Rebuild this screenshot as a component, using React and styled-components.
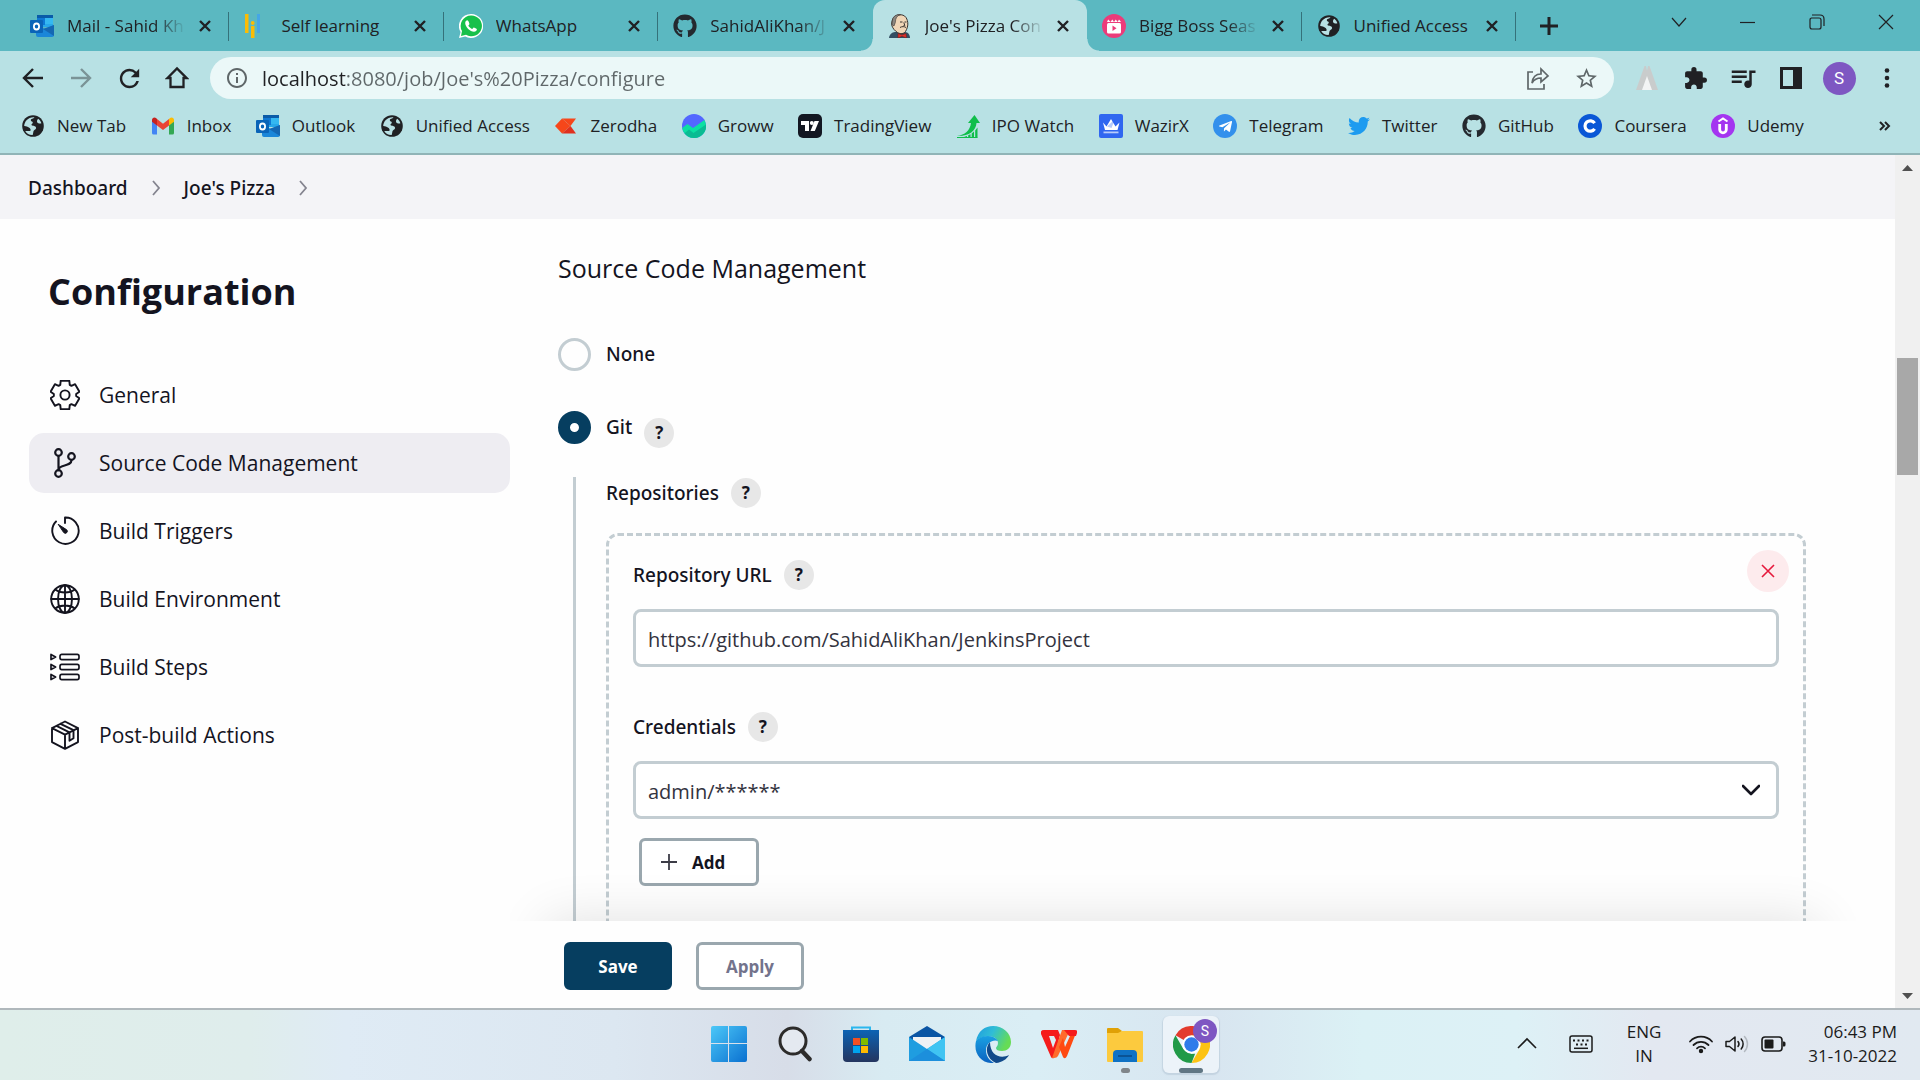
import React, { useState } from "react";
import styled, { createGlobalStyle, css } from "styled-components";
import { FaGithub, FaTwitter, FaTelegramPlane } from "react-icons/fa";
import { MdExtension, MdStarBorder, MdQueueMusic, MdInfoOutline, MdRefresh } from "react-icons/md";

const GlobalStyle = createGlobalStyle`
  *, *::before, *::after { box-sizing: border-box; }
  body { margin: 0; font-family: "Open Sans", "Noto Sans", sans-serif; color: #14141f; background: #fff; }
  button, input, select { font-family: inherit; }
  svg { display: block; flex: none; }
  a { color: inherit; text-decoration: none; }
`;

const Screen = styled.div`
  height: 100vh;
  display: flex;
  flex-direction: column;
  overflow: hidden;
`;

const PlainButton = styled.button`
  border: 0;
  padding: 0;
  background: transparent;
  color: inherit;
  display: flex;
  align-items: center;
  justify-content: center;
  flex: none;
`;

const mediumText = css`
  font-family: "Noto Sans", "Open Sans", sans-serif;
  font-weight: 500;
`;

/* ---------- browser chrome ---------- */

const TabStrip = styled.div`
  display: flex;
  height: 51px;
  flex: none;
  background: #5bb8c1;
  color: #202124;
`;

const TabList = styled.div`
  flex: 1;
  min-width: 0;
  display: flex;
  padding-left: 15px;
`;

const Tab = styled.div`
  position: relative;
  flex: 1 1 0;
  min-width: 0;
  display: flex;
  align-items: center;
  padding: 0 14px 0 15px;
  ${(p) =>
    p.$active &&
    css`
      background: #b8e1e4;
      border-radius: 12px 12px 0 0;
      &::before,
      &::after {
        content: "";
        position: absolute;
        bottom: 0;
        width: 12px;
        height: 12px;
      }
      &::before {
        right: 100%;
        background: radial-gradient(circle at 0 0, transparent 11px, #b8e1e4 12px);
      }
      &::after {
        left: 100%;
        background: radial-gradient(circle at 100% 0, transparent 11px, #b8e1e4 12px);
      }
    `}
  ${(p) =>
    p.$divider &&
    css`
      &::after {
        content: "";
        position: absolute;
        right: 0;
        top: 12px;
        width: 1px;
        height: 29px;
        background: #35717a;
      }
    `}
`;

const TabTitle = styled.span`
  flex: 1;
  min-width: 0;
  margin: 0 9px 0 13px;
  overflow: hidden;
  white-space: nowrap;
  font-size: 17px;
  line-height: 24px;
  mask-image: ${(p) => (p.$fade ? "linear-gradient(90deg, #000 calc(100% - 32px), transparent)" : "none")};
`;

const TabClose = styled(PlainButton)`
  width: 20px;
  height: 24px;
`;

const StripEnd = styled.div`
  flex: 0 0 404px;
  display: flex;
  justify-content: space-between;
  padding-left: 20px;
`;

const NewTab = styled(PlainButton)`
  width: 26px;
`;

const WindowControls = styled.div`
  display: flex;
`;

const WindowButton = styled(PlainButton)`
  width: 69px;
  height: 44px;
`;

const Toolbar = styled.div`
  flex: none;
  display: flex;
  padding: 6px 9px 0;
  background: #b8e1e4;
  color: #202124;
`;

const ToolButton = styled(PlainButton)`
  width: 48px;
  height: 42px;
  opacity: ${(p) => (p.$faded ? 0.4 : 1)};
`;

const Omnibox = styled.div`
  flex: 1;
  min-width: 0;
  height: 42px;
  margin: 0 9px;
  padding: 0 15px;
  display: flex;
  align-items: center;
  border-radius: 21px;
  background: #ebf8f8;
  color: #5f6769;
`;

const Address = styled.input`
  flex: 1;
  min-width: 0;
  height: 32px;
  margin-left: 13px;
  padding: 0;
  border: 0;
  outline: 0;
  font-size: 20px;
  color: #5f6769;
  background: linear-gradient(90deg, #202124 84px, #5f6769 84px);
  background-clip: text;
  -webkit-background-clip: text;
  -webkit-text-fill-color: transparent;
`;

const OmniActions = styled.div`
  display: flex;
  gap: 24px;
`;

const Avatar = styled.span`
  width: ${(p) => p.$size}px;
  height: ${(p) => p.$size}px;
  border-radius: 50%;
  display: flex;
  align-items: center;
  justify-content: center;
  background: #7e57c2;
  color: #fff;
  font-family: Roboto, sans-serif;
  font-size: ${(p) => p.$font}px;
`;

const BookmarkBar = styled.div`
  flex: none;
  display: flex;
  align-items: center;
  height: 56px;
  padding: 0 25px 0 21px;
  background: #b8e1e4;
  border-bottom: 2px solid #90b4b7;
  color: #202124;
`;

const BookmarkList = styled.nav`
  flex: 1;
  display: flex;
  justify-content: space-between;
`;

const Bookmark = styled.a`
  display: flex;
  align-items: center;
  gap: 12px;
  font-size: 17px;
  line-height: 24px;
  white-space: nowrap;
`;

const MoreBookmarks = styled(PlainButton)`
  width: 20px;
  margin-left: 71px;
`;

/* ---------- page ---------- */

const Viewport = styled.div`
  flex: 1;
  min-height: 0;
  display: flex;
  border-bottom: 2px solid #b0b8bc;
`;

const Page = styled.div`
  flex: 1;
  min-width: 0;
  display: flex;
  flex-direction: column;
`;

const Breadcrumbs = styled.nav`
  flex: none;
  height: 64px;
  padding: 2px 28px 0;
  display: flex;
  align-items: center;
  gap: 20px;
  background: #f4f4f7;
  font-size: 19px;
  line-height: 28px;
  ${mediumText}
`;

const Columns = styled.div`
  flex: 1;
  min-height: 0;
  display: grid;
  grid-template-columns: 510px minmax(0, 1fr);
  background: #fefefe;
`;

const Side = styled.aside`
  padding: 49px 0 0 29px;
`;

const Title = styled.h1`
  margin: 0 0 49px;
  padding-left: 19px;
  font-size: 36px;
  line-height: 48px;
  font-weight: 700;
`;

const SideNav = styled.nav`
  display: flex;
  flex-direction: column;
  gap: 8px;
`;

const SideLink = styled.a`
  display: flex;
  align-items: center;
  gap: 19px;
  height: 60px;
  padding-left: 21px;
  border-radius: 15px;
  background: ${(p) => (p.$active ? "#eeedf2" : "transparent")};
  font-size: 21px;
  line-height: 28px;
`;

const FormColumn = styled.main`
  display: flex;
  flex-direction: column;
  min-height: 0;
`;

const FormScroll = styled.div`
  position: relative;
  flex: 1;
  min-height: 0;
  overflow: hidden;
  padding: 32px 89px 0 48px;
  &::after {
    content: "";
    position: absolute;
    top: 100%;
    left: 36px;
    right: 77px;
    height: 87px;
    box-shadow: 0 0 52px rgba(0, 0, 0, 0.12);
  }
`;

const SectionTitle = styled.h2`
  margin: 0 0 53px;
  font-size: 25px;
  line-height: 34px;
  font-weight: 400;
`;

const RadioRow = styled.div`
  display: flex;
  align-items: flex-start;
  gap: 12px;
`;

const RadioLabel = styled.label`
  display: flex;
  align-items: center;
  gap: 15px;
  font-size: 19px;
  line-height: 33px;
  ${mediumText}
`;

const Radio = styled.input`
  appearance: none;
  width: 33px;
  height: 33px;
  margin: 0;
  border: 3px solid #c3cdd2;
  border-radius: 50%;
  background: #fefefe;
  &:checked {
    border: 12px solid #063e60;
  }
`;

const RadioGroup = styled.div`
  display: flex;
  flex-direction: column;
  gap: 40px;
`;

const Help = styled(PlainButton)`
  width: 30px;
  height: 30px;
  margin-top: ${(p) => (p.$lowered ? 7 : 0)}px;
  border-radius: 50%;
  background: #e7e7e7;
  color: #14141f;
  font-size: 17px;
  font-weight: 700;
  line-height: 30px;
`;

const Nested = styled.div`
  margin: 29px 0 0 15px;
  padding: 1px 0 0 30px;
  border-left: 3px solid #c3cdd2;
`;

const FieldHead = styled.div`
  display: flex;
  align-items: center;
  gap: 12px;
  height: 30px;
  font-size: 19px;
  line-height: 30px;
  ${mediumText}
`;

const RepoBox = styled.div`
  position: relative;
  margin-top: 25px;
  padding: 24px 24px 200px;
  border: 3px dashed #c3cdd2;
  border-radius: 12px;
`;

const RemoveButton = styled(PlainButton)`
  position: absolute;
  top: 14px;
  right: 14px;
  width: 42px;
  height: 42px;
  border-radius: 50%;
  background: #fdebed;
`;

const Field = styled.div`
  margin-bottom: 45px;
`;

const controlStyle = css`
  display: block;
  width: 100%;
  height: 58px;
  margin-top: 19px;
  padding: 2px 12px 0;
  border: 3px solid #c3cdd2;
  border-radius: 8px;
  outline: 0;
  background: #fff;
  color: #33333e;
  font-size: 20px;
`;

const TextInput = styled.input`
  ${controlStyle}
`;

const SelectWrap = styled.div`
  display: grid;
  align-items: center;
  margin-bottom: 19px;
  & > * {
    grid-area: 1 / 1;
  }
  & > svg {
    justify-self: end;
    margin: 19px 19px 0 0;
    pointer-events: none;
  }
`;

const Select = styled.select`
  ${controlStyle}
  appearance: none;
`;

const Button = styled.button`
  display: flex;
  align-items: center;
  justify-content: center;
  gap: 15px;
  width: ${(p) => p.$width || 108}px;
  height: 48px;
  padding: 0;
  border: 3px solid ${(p) => (p.$primary ? "#063e60" : "#9aa7ae")};
  border-radius: 6px;
  background: ${(p) => (p.$primary ? "#063e60" : "#fff")};
  color: ${(p) => (p.$primary ? "#fff" : p.$muted ? "#73738c" : "#14141f")};
  font-size: 17px;
  font-weight: 700;
`;

const AddRow = styled.div`
  padding-left: 6px;
`;

const AddButton = styled(Button)`
  justify-content: flex-start;
  padding-left: 19px;
`;

const FormActions = styled.div`
  flex: none;
  display: flex;
  gap: 24px;
  padding: 21px 54px 18px;
`;

const ScrollTrack = styled.div`
  flex: none;
  width: 25px;
  display: flex;
  flex-direction: column;
  align-items: center;
  justify-content: space-between;
  padding: 9px 0 8px;
  background: #f0f0f0;
`;

const ScrollThumb = styled.div`
  width: 21px;
  height: 117px;
  margin: 187px 0 auto;
  background: #a8a8a8;
`;

/* ---------- taskbar ---------- */

const Taskbar = styled.div`
  flex: none;
  height: 70px;
  padding-bottom: 2px;
  display: grid;
  grid-template-columns: 1fr auto 1fr;
  align-items: center;
  background: linear-gradient(
    90deg,
    #dfeeea 0%,
    #dfedec 13%,
    #dfebf5 18%,
    #dce7f1 32%,
    #d7dde8 41%,
    #d8ebf2 46%,
    #daeef5 54%,
    #d8e5f0 63%,
    #dbf1f5 71%,
    #ddf1f6 79%,
    #e3e8f1 86%,
    #e1e9f1 100%
  );
`;

const Apps = styled.div`
  grid-column: 2;
  display: flex;
  gap: 10px;
`;

const AppButton = styled(PlainButton)`
  position: relative;
  width: 56px;
  height: 57px;
  border-radius: 6px;
  ${(p) =>
    p.$active &&
    css`
      background: #ecf3f9;
      box-shadow: 0 1px 1px 1px rgba(150, 170, 190, 0.3);
    `}
  ${(p) =>
    p.$mark &&
    css`
      &::after {
        content: "";
        position: absolute;
        bottom: 0;
        left: calc(50% - ${p.$mark / 2}px);
        width: ${p.$mark}px;
        height: 5px;
        border-radius: 3px;
        background: ${p.$active ? "#607684" : "#80868a"};
      }
    `}
`;

const AppBadge = styled.span`
  position: absolute;
  top: 3px;
  right: 2px;
`;

const Tray = styled.div`
  justify-self: end;
  display: flex;
  align-items: center;
  padding-right: 23px;
  color: #1b1b1b;
  font-size: 17px;
  line-height: 24px;
`;

const TrayIcons = styled.div`
  display: flex;
  align-items: center;
  gap: ${(p) => p.$gap}px;
`;

const Language = styled.div`
  margin: 0 27px 0 34px;
  text-align: center;
`;

const Clock = styled.div`
  margin-left: 22px;
  text-align: right;
`;

/* ---------- drawings ---------- */

const Outlook = () => (
  <svg width="24" height="24" viewBox="0 0 24 24">
    <rect x="7" y="1" width="16" height="12" fill="#28a8ea" />
    <rect x="7" y="1" width="16" height="3" fill="#0a5ba8" />
    <rect x="7" y="4" width="8" height="7" fill="#0f78d4" />
    <rect x="15" y="4" width="8" height="6" fill="#35b8f1" />
    <path d="M6 11l9 4 9-4v10a2 2 0 0 1-2 2H8a2 2 0 0 1-2-2z" fill="#1a86d9" />
    <path d="M24 11v11l-11-7z" fill="#1467b3" />
    <rect x="0" y="6" width="13" height="13" rx="1" fill="#0a64b8" />
    <ellipse cx="6.500" cy="12.500" rx="2.600" ry="3" fill="none" stroke="#fff" strokeWidth="1.800" />
  </svg>
);

const SelfLearning = () => (
  <svg width="24" height="24" viewBox="0 0 24 24">
    <rect x="1" y="0" width="3.500" height="19" fill="#fbbc05" />
    <rect x="13" y="0" width="3" height="19" fill="#45a6e6" />
    <rect x="7" y="12" width="3.500" height="12" fill="#fbbc05" />
    <circle cx="8.700" cy="9" r="1.900" fill="#fbbc05" />
  </svg>
);

const WhatsAppMark = () => (
  <svg width="24" height="24" viewBox="0 0 24 24">
    <path d="M12 0a12 12 0 0 0-10.400 18L0 24l6.200-1.600A12 12 0 1 0 12 0z" fill="#fff" />
    <path d="M12 1.500a10.400 10.400 0 0 0-9 15.600L2 22l5-1.300A10.400 10.400 0 1 0 12 1.500z" fill="#17c04b" />
    <path
      d="M8.200 6.200c-.7 0-2 1-2 2.700 0 4 5 8.800 8.800 8.800 1.600 0 2.900-1 2.900-2.200 0-.8-2.600-2-3.100-2-.6 0-1.100 1.500-1.700 1.500-.8 0-3.700-2.500-3.700-3.400 0-.5 1-1 1-1.700 0-.6-1-3.700-2.200-3.700z"
      fill="#fff"
    />
  </svg>
);

const Globe = () => (
  <svg width="24" height="24" viewBox="0 0 24 24">
    <circle cx="12" cy="12" r="10.800" fill="#202124" />
    <path
      d="M13.500 3.200c-1 1.800-3.700 1.300-3.700 3.100 0 1.500 2 .9 2 2.300 0 1.300-1.300 1-1.300 2.100 0 1.500 4.600.4 4.600 3.300 0 1.700-2.600 1.800-2.800 4.200l-.6 2.900c-3.300.2-6-1.400-7.500-4.100l4.400.1c1.900 0 .8-2.800-.4-3.300-1.700-.8-3.100-1.800-5-1.700C3.200 7.200 7.700 2.500 13.500 3.200z"
      fill="#b8e1e4"
    />
    <path d="M17.200 4.800c1.600 1.200 2.700 2.700 3.200 4.500-1.700.7-3.900.2-4.300-1.200-.3-1.200.1-2.400 1.100-3.300z" fill="#b8e1e4" />
  </svg>
);

const Butler = () => (
  <svg width="24" height="24" viewBox="0 0 24 24">
    <path d="M1 24c.5-4 3-5.500 6-6l10 0c3 .3 5 2.500 5 6z" fill="#334e62" />
    <path d="M5 4.500C7 .5 15-1 18 3.500c2.500 4 2.500 9-.5 14-1.500 2.600-5.500 2.600-8 1-3-2-4.500-4-5.500-6.500-.8-2.500 0-5.500 1-7.500z" fill="#f0d6b7" stroke="#3a3430" strokeWidth="1" />
    <path d="M4.500 6C5 1.500 10 0 12.500.7 9 1.500 7.500 4 7.300 8.500L6 12l-2-1.500z" fill="#8b8780" stroke="#3a3430" strokeWidth=".6" />
    <path d="M12 8h2.500M16.500 8h2M12 13.500c2-1.300 4.500-1 6 0M15.800 8.500l1 3-1.500.4" fill="none" stroke="#3a3430" strokeWidth="1" />
    <path d="M10 19.500l4 1.500 4-1.500.5 4.500-4.500-1.700L10 24z" fill="#e0312b" stroke="#7c1c18" strokeWidth=".6" />
  </svg>
);

const BigBoss = () => (
  <svg width="24" height="24" viewBox="0 0 24 24">
    <circle cx="12" cy="12" r="12" fill="#ec3b7a" />
    <rect x="5" y="9" width="14" height="10.500" rx="1.500" fill="#fff" />
    <path d="M5 8l1.200-2.500L8.500 8l1.800-2.500L12 8l1.800-2.500L15.600 8 17 5.500 19 8z" fill="#fff" />
    <path d="M10.500 11.500l4 2.700-4 2.700z" fill="#ec3b7a" />
  </svg>
);

const Gmail = () => (
  <svg width="24" height="24" viewBox="0 0 24 24">
    <path d="M1 6v13a1.500 1.500 0 0 0 1.500 1.500H6V10z" fill="#4285f4" />
    <path d="M23 6v13a1.500 1.500 0 0 1-1.500 1.500H18V10z" fill="#34a853" />
    <path d="M18 5v6.500l5-3.800V6c0-2.500-2.500-3.200-4-2z" fill="#fbbc04" />
    <path d="M1 6v1.700l5 3.800V5L5 4C3.500 2.800 1 3.500 1 6z" fill="#c5221f" />
    <path d="M6 5l6 4.700L18 5v6.500l-6 4.600-6-4.600z" fill="#ea4335" />
  </svg>
);

const Zerodha = () => (
  <svg width="24" height="24" viewBox="0 0 24 24">
    <path d="M8 4.500h14L16.500 12z" fill="#f6461a" />
    <path d="M8 4.500L1 12l7 7.500L16.500 12z" fill="#f6461a" />
    <path d="M8 19.500h14L16.500 12z" fill="#e0301e" />
  </svg>
);

const Groww = () => (
  <svg width="24" height="24" viewBox="0 0 24 24">
    <circle cx="12" cy="12" r="12" fill="#5367ff" />
    <path d="M.2 14l5.300-4 5.500 4L22.400 6A12 12 0 1 1 .2 14z" fill="#0be0a2" />
    <path d="M2.500 19.200L7 15.500l4.500 3.500L24 10.500A12 12 0 0 1 2.500 19.200z" fill="#0abb92" />
  </svg>
);

const TradingView = () => (
  <svg width="24" height="24" viewBox="0 0 24 24">
    <rect width="24" height="24" rx="5" fill="#131722" />
    <path d="M3 7h8v10H7v-6H3zM16.500 7H21l-4.200 10h-4.300z" fill="#fff" />
    <circle cx="13.800" cy="9" r="2" fill="#fff" />
  </svg>
);

const IpoWatch = () => (
  <svg width="24" height="24" viewBox="0 0 24 24">
    <path d="M1 22c8-1 13-5.500 14-13h-3L18.500 1l5.500 8h-3.500c-.5 8-8 13.500-19.500 13z" fill="#0fbe4a" />
    <path d="M8.500 23.500v-.8l2.500-.6v1.400zm3.700 0v-2.200l2.300-1v3.200zm3.500 0v-4l2.300-2v6zm3.500-7l2.300-3v10h-2.300z" fill="#0fbe4a" />
    <path d="M1 23.500h20.500" stroke="#0fbe4a" />
  </svg>
);

const WazirX = () => (
  <svg width="24" height="24" viewBox="0 0 24 24">
    <rect width="24" height="24" rx="2" fill="#3067f0" />
    <path d="M4 8.500l3.500 4L12 5l4.500 7.500 4-4-2 7.500H6z" fill="#fff" />
    <path d="M8 12.500L16 5l-3.500 9z" fill="#3067f0" opacity=".35" />
    <path d="M4.500 17.500h15v1.800h-15z" fill="#b9ccfb" />
  </svg>
);

const Disc = styled.span`
  width: 24px;
  height: 24px;
  display: flex;
  align-items: center;
  justify-content: center;
  border-radius: 50%;
  background: ${(p) => p.$fill};
  color: #fff;
`;

const Coursera = () => (
  <svg width="24" height="24" viewBox="0 0 24 24">
    <circle cx="12" cy="12" r="12" fill="#0a57d6" />
    <path d="M16.600 9.200a5.200 5.200 0 1 0 0 5.600" fill="none" stroke="#fff" strokeWidth="3.200" />
  </svg>
);

const Udemy = () => (
  <svg width="24" height="24" viewBox="0 0 24 24">
    <circle cx="12" cy="12" r="12" fill="#a435f0" />
    <path d="M7.500 7.500L12 4.500l4.500 3" fill="none" stroke="#fff" strokeWidth="2" />
    <path d="M8.700 10v5.500a3.300 3.300 0 0 0 6.600 0V10" fill="none" stroke="#fff" strokeWidth="2.800" />
  </svg>
);

const Line = ({ size = 24, d, weight = 2, color = "currentColor", cap = "butt" }) => (
  <svg width={size} height={size} viewBox={`0 0 ${size} ${size}`} fill="none" stroke={color} strokeWidth={weight} strokeLinecap={cap} strokeLinejoin={cap === "round" ? "round" : "miter"}>
    <path d={d} />
  </svg>
);

const gearPath = [0, 1, 2, 3, 4, 5]
  .map((k) =>
    [
      [-25, 11.2],
      [-17, 14.8],
      [17, 14.8],
      [25, 11.2],
    ]
      .map(([offset, r]) => {
        const a = ((k * 60 + offset - 90) * Math.PI) / 180;
        return `${15 + r * Math.cos(a)} ${15 + r * Math.sin(a)}`;
      })
      .join("L")
  )
  .join("L");

const SideIcon = ({ children }) => (
  <svg width="30" height="30" viewBox="0 0 30 30" fill="none" stroke="#14141f" strokeWidth="1.900" strokeLinecap="round" strokeLinejoin="round">
    {children}
  </svg>
);

const GearIcon = () => (
  <SideIcon>
    <path d={`M${gearPath}Z`} />
    <circle cx="15" cy="15" r="4.600" />
  </SideIcon>
);

const BranchIcon = () => (
  <SideIcon>
    <g strokeWidth="2.200">
      <circle cx="8.500" cy="4.500" r="3.300" />
      <circle cx="8.500" cy="25.500" r="3.300" />
      <circle cx="21.500" cy="8.500" r="3.300" />
      <path d="M8.500 8v14.200M21.500 12c0 7.500-13 3.500-13 10" />
    </g>
  </SideIcon>
);

const TimerIcon = () => (
  <SideIcon>
    <path d="M15 7V1.500A13.200 13.200 0 1 1 6 5.500" />
    <path d="M8.500 8.500l8.200 5.300a2 2 0 0 1-2.800 2.900z" fill="#14141f" strokeWidth="1" />
  </SideIcon>
);

const WebIcon = () => (
  <SideIcon>
    <circle cx="15" cy="15" r="13.800" />
    <ellipse cx="15" cy="15" rx="7" ry="13.800" />
    <path d="M15 1.200v27.600M1.200 15h27.600M5.500 5.800c5 3.600 14 3.600 19 0M5.500 24.200c5-3.600 14-3.600 19 0" />
  </SideIcon>
);

const StepsIcon = () => (
  <SideIcon>
    {[5, 15, 25].map((y) => (
      <g key={y} strokeWidth="1.700">
        <path d={`M1 ${y - 2.6}l4.600 2.600L1 ${y + 2.6}z`} />
        <rect x="10" y={y - 2.6} width="19" height="5.200" rx="1.800" />
      </g>
    ))}
  </SideIcon>
);

const PackageIcon = () => (
  <SideIcon>
    <path d="M15 1.500l13 6.600v14L15 28.800 2 22.100v-14zM2 8.100l13 6.500 13-6.500M15 14.600v14.200M6.500 5.900l13 6.500v8.300l4-2.500v-8L10.500 3.800" />
  </SideIcon>
);

/* ---------- data ---------- */

const tabs = [
  { title: "Mail - Sahid Kh", icon: <Outlook />, divider: true, fade: true },
  { title: "Self learning", icon: <SelfLearning />, divider: true },
  { title: "WhatsApp", icon: <WhatsAppMark />, divider: true },
  { title: "SahidAliKhan/J", icon: <FaGithub size={24} color="#24292f" />, fade: true },
  { title: "Joe's Pizza Con", icon: <Butler />, active: true, fade: true },
  { title: "Bigg Boss Seas", icon: <BigBoss />, divider: true, fade: true },
  { title: "Unified Access", icon: <Globe />, divider: true },
];

const bookmarks = [
  ["New Tab", <Globe />],
  ["Inbox", <Gmail />],
  ["Outlook", <Outlook />],
  ["Unified Access", <Globe />],
  ["Zerodha", <Zerodha />],
  ["Groww", <Groww />],
  ["TradingView", <TradingView />],
  ["IPO Watch", <IpoWatch />],
  ["WazirX", <WazirX />],
  ["Telegram", <Disc $fill="#3390ec"><FaTelegramPlane size={15} /></Disc>],
  ["Twitter", <FaTwitter size={22} color="#1d9bf0" />],
  ["GitHub", <FaGithub size={24} color="#24292f" />],
  ["Coursera", <Coursera />],
  ["Udemy", <Udemy />],
];

const sections = [
  ["General", <GearIcon />],
  ["Source Code Management", <BranchIcon />],
  ["Build Triggers", <TimerIcon />],
  ["Build Environment", <WebIcon />],
  ["Build Steps", <StepsIcon />],
  ["Post-build Actions", <PackageIcon />],
];

/* ---------- taskbar drawings ---------- */

const WindowsLogo = () => (
  <svg width="36" height="36" viewBox="0 0 36 36">
    <defs>
      <linearGradient id="win" x1="0" y1="0" x2="1" y2="1">
        <stop offset="0" stopColor="#4cc8f8" />
        <stop offset="1" stopColor="#0a70d0" />
      </linearGradient>
    </defs>
    <path d="M2 0h15v17H0V2a2 2 0 0 1 2-2zM18 0h16a2 2 0 0 1 2 2v15H18zM0 18h17v18H2a2 2 0 0 1-2-2zM18 18h18v16a2 2 0 0 1-2 2H18z" fill="url(#win)" />
  </svg>
);

const SearchLogo = () => (
  <svg width="36" height="36" viewBox="0 0 36 36" fill="none" stroke="#2c2b2a">
    <circle cx="16" cy="15" r="13" strokeWidth="3" fill="#e4e9f0" />
    <path d="M25 25l7.500 8" strokeWidth="4.500" strokeLinecap="round" />
  </svg>
);

const StoreLogo = () => (
  <svg width="36" height="38" viewBox="0 0 36 38">
    <defs>
      <linearGradient id="store" x1="0" y1="0" x2="0" y2="1">
        <stop offset="0" stopColor="#0c63b4" />
        <stop offset="1" stopColor="#24355f" />
      </linearGradient>
    </defs>
    <path d="M9 8V2.500h18V8" fill="none" stroke="#2bb7ee" strokeWidth="2" />
    <path d="M0 5h36v28a4 4 0 0 1-4 4H4a4 4 0 0 1-4-4z" fill="url(#store)" />
    <path d="M10 13h7v7h-7z" fill="#f25022" />
    <path d="M18 13h7v7h-7z" fill="#7fba00" />
    <path d="M10 21h7v7h-7z" fill="#00a4ef" />
    <path d="M18 21h7v7h-7z" fill="#ffb900" />
  </svg>
);

const MailLogo = () => (
  <svg width="36" height="36" viewBox="0 0 36 36">
    <path d="M0 11L18 0l18 11v6H0z" fill="#0b55a4" />
    <path d="M4 11h28v5l-14 10L4 16z" fill="#f0f2f5" />
    <path d="M0 11l18 12 18-12v24H0z" fill="#1f9de0" />
    <path d="M36 11v24L18 23z" fill="#40c4f2" />
    <path d="M0 35h36L18 23z" fill="#1c8fdc" />
  </svg>
);

const EdgeLogo = () => (
  <svg width="36" height="37" viewBox="0 0 36 37">
    <defs>
      <linearGradient id="edgeTop" x1="0" y1="0" x2="1" y2=".4">
        <stop offset="0" stopColor="#1e9be0" />
        <stop offset=".5" stopColor="#30bdd6" />
        <stop offset="1" stopColor="#66dc55" />
      </linearGradient>
      <linearGradient id="edgeLow" x1="0" y1="0" x2="0" y2="1">
        <stop offset="0" stopColor="#1aa0e2" />
        <stop offset="1" stopColor="#0b62c0" />
      </linearGradient>
    </defs>
    <path d="M1 15C3 5 10 0 18 0c10 0 18 7 18 16 0 6-4 9-9 9-4 0-6-1-6-3 0-1 2-2 2-5C23 10 10 7 1 15z" fill="url(#edgeTop)" />
    <path d="M1 15c5-6 18-7 22 0-5-2-12 2-12 9 0 6 3 10 8 13C7 38-2 28 1 15z" fill="url(#edgeLow)" />
    <path d="M15 16c-6 6-3 17 6 21 6-.5 11-4 13-8-8 4-19 1-19-13z" fill="#114a8b" />
  </svg>
);

const WpsLogo = () => (
  <svg width="36" height="30" viewBox="0 0 36 30">
    <path d="M3 1h14l2 5-3 12-3 11q-2 1-3-1L0 5Q-1 1 3 1zM8 7l4 12 3-8-2-4z" fill="#f51b1b" fillRule="evenodd" />
    <path d="M21 1h8L17 27q-1 2-4 2h-2z" fill="#ff6b2c" />
    <path d="M29 7L35 4 26 27q-2 4-4 1l-4-10 4-9 2 9z" fill="#ff4a12" />
    <path d="M23 1h11q3 0 2 3l-1 3h-7z" fill="#f51b1b" />
  </svg>
);

const FolderLogo = () => (
  <svg width="36" height="35" viewBox="0 0 36 35">
    <path d="M0 2a1 1 0 0 1 1-1h10l4 3-3 4H0z" fill="#e0a106" />
    <path d="M0 6h11l4-2h20a1 1 0 0 1 1 1v29a1 1 0 0 1-1 1H1a1 1 0 0 1-1-1z" fill="#fcca3e" />
    <path d="M6 35V27a4 4 0 0 1 4-4h16a4 4 0 0 1 4 4v8z" fill="#0f72c4" />
    <path d="M11 29h14" stroke="#0a4a86" strokeWidth="1.500" />
  </svg>
);

const ChromeLogo = () => (
  <svg width="37" height="37" viewBox="0 0 36 36">
    <path d="M18 18L2.400 9A18 18 0 0 1 33.600 9z" fill="#e33b2e" />
    <path d="M18 9h15.600A18 18 0 0 1 18 36l7.800-13.500z" fill="#fcc314" />
    <path d="M2.400 9l7.800 13.500L18 27h3.500L18 36A18 18 0 0 1 2.400 9z" fill="#219a48" />
    <circle cx="18" cy="18" r="9" fill="#fff" />
    <circle cx="18" cy="18" r="7" fill="#2f7bea" />
  </svg>
);

const WifiIcon = () => (
  <svg width="26" height="20" viewBox="0 0 26 20" fill="none" stroke="#1b1b1b" strokeWidth="1.800" strokeLinecap="round">
    <path d="M2 7.500a15 15 0 0 1 22 0M5.500 11a10.500 10.500 0 0 1 15 0M9 14.300a5.800 5.800 0 0 1 8 0" />
    <circle cx="13" cy="17" r="1.300" fill="#1b1b1b" />
  </svg>
);

const SpeakerIcon = () => (
  <svg width="25" height="20" viewBox="0 0 25 20" fill="none" stroke="#1b1b1b" strokeWidth="1.500" strokeLinejoin="round" strokeLinecap="round">
    <path d="M1 7.500v5h3.500L10 17V3L4.500 7.500z" />
    <path d="M13 7.500a4 4 0 0 1 0 5M16.200 5a7.500 7.500 0 0 1 0 10" />
    <path d="M19.500 2.500a11 11 0 0 1 0 15" stroke="#b3b9c0" />
  </svg>
);

const BatteryIcon = () => (
  <svg width="25" height="18" viewBox="0 0 25 18">
    <rect x="1" y="2" width="20" height="14" rx="3" fill="none" stroke="#1b1b1b" strokeWidth="1.600" />
    <rect x="3.500" y="4.500" width="9" height="9" rx="1" fill="#1b1b1b" />
    <path d="M22 6.500h1a1.500 1.500 0 0 1 1.500 1.500v2a1.500 1.500 0 0 1-1.500 1.500h-1z" fill="#1b1b1b" />
  </svg>
);

const KeyboardIcon = () => (
  <svg width="24" height="18" viewBox="0 0 24 18" fill="none" stroke="#1b1b1b" strokeWidth="1.500">
    <rect x="1" y="1" width="22" height="16" rx="2" />
    <path d="M4 5.500h17M7 9.500h11" strokeDasharray="2 2.500" strokeWidth="1.800" />
    <path d="M5 13.300h14" />
  </svg>
);

const ExtensionA = () => (
  <svg width="24" height="24" viewBox="0 0 24 24">
    <path d="M1 24L9.500 0h5L23 24z" fill="#c9cccc" />
    <path d="M7 24l5-14 5 14z" fill="#f2f4f4" />
    <path d="M11 0h2l-1 5z" fill="#b8e1e4" />
  </svg>
);

/* ---------- sections ---------- */

function BrowserChrome() {
  const [address, setAddress] = useState("localhost:8080/job/Joe's%20Pizza/configure");
  return (
    <>
      <TabStrip>
        <TabList>
          {tabs.map((tab) => (
            <Tab key={tab.title} $active={tab.active} $divider={tab.divider}>
              {tab.icon}
              <TabTitle $fade={tab.fade}>{tab.title}</TabTitle>
              <TabClose aria-label="Close tab">
                <Line size={14} d="M2 2L12 12M12 2L2 12" weight={2.4} />
              </TabClose>
            </Tab>
          ))}
        </TabList>
        <StripEnd>
          <NewTab aria-label="New tab">
            <Line size={18} d="M9 0V18M0 9H18" weight={3} />
          </NewTab>
          <WindowControls>
            <WindowButton aria-label="Search tabs">
              <Line size={16} d="M1 4L8 12L15 4" weight={1.2} />
            </WindowButton>
            <WindowButton aria-label="Minimize">
              <Line size={16} d="M0 8.500H15" weight={1.2} />
            </WindowButton>
            <WindowButton aria-label="Restore">
              <Line size={18} d="M3 5H11Q13 5 13 7V14Q13 16 11 16H4Q2 16 2 14V7Q2 5 4 5M4 2H12Q16 2 16 6V13" weight={1.2} />
            </WindowButton>
            <WindowButton aria-label="Close">
              <Line size={16} d="M1 1L15 15M15 1L1 15" weight={1.2} />
            </WindowButton>
          </WindowControls>
        </StripEnd>
      </TabStrip>
      <Toolbar>
        <ToolButton aria-label="Back">
          <Line d="M22 12H3M12 3L3 12L12 21" weight={2.4} />
        </ToolButton>
        <ToolButton aria-label="Forward" $faded>
          <Line d="M2 12H21M12 3L21 12L12 21" weight={2.4} />
        </ToolButton>
        <ToolButton aria-label="Reload">
          <MdRefresh size={29} />
        </ToolButton>
        <ToolButton aria-label="Home">
          <Line d="M2.500 12L12 2.500L21.500 12H18.500V21H5.500V12Z" weight={2.3} />
        </ToolButton>
        <Omnibox>
          <MdInfoOutline size={24} />
          <Address aria-label="Address" value={address} onChange={(e) => setAddress(e.target.value)} />
          <OmniActions>
            <PlainButton aria-label="Share">
              <Line d="M7 6H2V23H18V18M6 17Q7 8 15 8V3L22 10L15 16V12Q9 12 6 17Z" weight={1.7} />
            </PlainButton>
            <PlainButton aria-label="Bookmark this tab">
              <MdStarBorder size={25} />
            </PlainButton>
          </OmniActions>
        </Omnibox>
        <ToolButton aria-label="Extension">
          <ExtensionA />
        </ToolButton>
        <ToolButton aria-label="Extensions">
          <MdExtension size={25} />
        </ToolButton>
        <ToolButton aria-label="Media controls">
          <MdQueueMusic size={30} />
        </ToolButton>
        <ToolButton aria-label="Side panel">
          <svg width="22" height="22" viewBox="0 0 22 22">
            <path d="M0 0h22v22H0zM3 3v16h10V3z" fill="#202124" fillRule="evenodd" />
          </svg>
        </ToolButton>
        <ToolButton aria-label="Profile">
          <Avatar $size={33} $font={17}>S</Avatar>
        </ToolButton>
        <ToolButton aria-label="Menu">
          <svg width="6" height="20" viewBox="0 0 6 20" fill="#202124">
            <circle cx="3" cy="2.500" r="2.300" />
            <circle cx="3" cy="10" r="2.300" />
            <circle cx="3" cy="17.500" r="2.300" />
          </svg>
        </ToolButton>
      </Toolbar>
      <BookmarkBar>
        <BookmarkList aria-label="Bookmarks">
          {bookmarks.map(([name, icon]) => (
            <Bookmark key={name} href="#">
              {icon}
              {name}
            </Bookmark>
          ))}
        </BookmarkList>
        <MoreBookmarks aria-label="More bookmarks">
          <Line size={12} d="M1 2L5 6L1 10M6 2L10 6L6 10" weight={2} />
        </MoreBookmarks>
      </BookmarkBar>
    </>
  );
}

const Crumb = () => <Line size={16} d="M5 1L11 8L5 15" weight={1.8} color="#84848f" />;

const HelpButton = ({ topic, lowered }) => (
  <Help $lowered={lowered} aria-label={`Help for ${topic}`}>?</Help>
);

function SourceCodeForm() {
  const [scm, setScm] = useState("git");
  const [url, setUrl] = useState("https://github.com/SahidAliKhan/JenkinsProject");
  return (
    <FormColumn>
      <FormScroll>
        <SectionTitle>Source Code Management</SectionTitle>
        <RadioGroup>
          <RadioRow>
            <RadioLabel>
              <Radio type="radio" name="scm" checked={scm === "none"} onChange={() => setScm("none")} />
              None
            </RadioLabel>
          </RadioRow>
          <RadioRow>
            <RadioLabel>
              <Radio type="radio" name="scm" checked={scm === "git"} onChange={() => setScm("git")} />
              Git
            </RadioLabel>
            <HelpButton topic="Git" lowered />
          </RadioRow>
        </RadioGroup>
        <Nested>
          <FieldHead>
            Repositories
            <HelpButton topic="Repositories" />
          </FieldHead>
          <RepoBox>
            <RemoveButton aria-label="Remove repository">
              <Line size={14} d="M1 1L13 13M13 1L1 13" weight={1.6} color="#e6193c" />
            </RemoveButton>
            <Field>
              <FieldHead>
                <label htmlFor="repo-url">Repository URL</label>
                <HelpButton topic="Repository URL" />
              </FieldHead>
              <TextInput id="repo-url" value={url} onChange={(e) => setUrl(e.target.value)} />
            </Field>
            <FieldHead>
              <label htmlFor="credentials">Credentials</label>
              <HelpButton topic="Credentials" />
            </FieldHead>
            <SelectWrap>
              <Select id="credentials" defaultValue="admin">
                <option value="admin">admin/******</option>
              </Select>
              <Line size={18} d="M1 5L9 13L17 5" weight={2.6} cap="round" />
            </SelectWrap>
            <AddRow>
              <AddButton $width={120}>
                <Line size={16} d="M8 0V16M0 8H16" weight={1.8} color="#3c3c47" />
                Add
              </AddButton>
            </AddRow>
          </RepoBox>
        </Nested>
      </FormScroll>
      <FormActions>
        <Button $primary>Save</Button>
        <Button $muted>Apply</Button>
      </FormActions>
    </FormColumn>
  );
}

function WindowsTaskbar() {
  return (
    <Taskbar>
      <Apps>
        <AppButton aria-label="Start"><WindowsLogo /></AppButton>
        <AppButton aria-label="Search"><SearchLogo /></AppButton>
        <AppButton aria-label="Microsoft Store"><StoreLogo /></AppButton>
        <AppButton aria-label="Mail"><MailLogo /></AppButton>
        <AppButton aria-label="Edge"><EdgeLogo /></AppButton>
        <AppButton aria-label="WPS Office"><WpsLogo /></AppButton>
        <AppButton aria-label="File Explorer" $mark={9}><FolderLogo /></AppButton>
        <AppButton aria-label="Chrome" $active $mark={24}>
          <ChromeLogo />
          <AppBadge>
            <Avatar $size={24} $font={14}>S</Avatar>
          </AppBadge>
        </AppButton>
      </Apps>
      <Tray>
        <TrayIcons $gap={32}>
          <Line size={20} d="M1 14L10 5L19 14" weight={1.6} />
          <KeyboardIcon />
        </TrayIcons>
        <Language>ENG<br />IN</Language>
        <TrayIcons $gap={11}>
          <WifiIcon />
          <SpeakerIcon />
          <BatteryIcon />
        </TrayIcons>
        <Clock>06:43 PM<br />31-10-2022</Clock>
      </Tray>
    </Taskbar>
  );
}

export default function App() {
  return (
    <Screen>
      <GlobalStyle />
      <BrowserChrome />
      <Viewport>
        <Page>
          <Breadcrumbs aria-label="Breadcrumb">
            <a href="#">Dashboard</a>
            <Crumb />
            <a href="#">Joe's Pizza</a>
            <Crumb />
          </Breadcrumbs>
          <Columns>
            <Side>
              <Title>Configuration</Title>
              <SideNav>
                {sections.map(([name, icon]) => (
                  <SideLink key={name} href="#" $active={name === "Source Code Management"}>
                    {icon}
                    {name}
                  </SideLink>
                ))}
              </SideNav>
            </Side>
            <SourceCodeForm />
          </Columns>
        </Page>
        <ScrollTrack aria-hidden="true">
          <svg width="11" height="7" viewBox="0 0 11 7"><path d="M0 7L5.500 1L11 7z" fill="#505050" /></svg>
          <ScrollThumb />
          <svg width="11" height="7" viewBox="0 0 11 7"><path d="M0 0h11L5.500 6z" fill="#505050" /></svg>
        </ScrollTrack>
      </Viewport>
      <WindowsTaskbar />
    </Screen>
  );
}
